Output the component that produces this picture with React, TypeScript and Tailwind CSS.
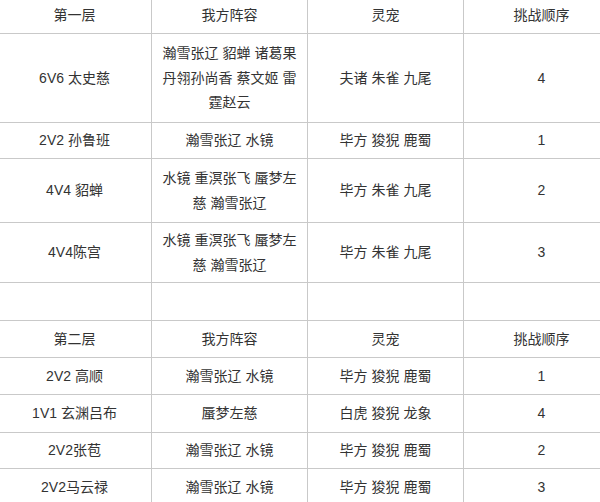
type Row = { h: string; cells: [string, string, string, string]; head?: boolean };

const ROWS: Row[] = [
  { h: "h-[37px]", head: true, cells: ["第一层", "我方阵容", "灵宠", "挑战顺序"] },
  { h: "h-[89px]", cells: ["6V6 太史慈", "瀚雪张辽 貂蝉 诸葛果 丹翎孙尚香 蔡文姬 雷霆赵云", "夫诸 朱雀 九尾", "4"] },
  { h: "h-[36px]", cells: ["2V2 孙鲁班", "瀚雪张辽 水镜", "毕方 狻猊 鹿蜀", "1"] },
  { h: "h-[64px]", cells: ["4V4 貂蝉", "水镜 重溟张飞 蜃梦左慈 瀚雪张辽", "毕方 朱雀 九尾", "2"] },
  { h: "h-[60px]", cells: ["4V4陈宫", "水镜 重溟张飞 蜃梦左慈 瀚雪张辽", "毕方 朱雀 九尾", "3"] },
  { h: "h-[38px]", cells: ["", "", "", ""] },
  { h: "h-[37px]", head: true, cells: ["第二层", "我方阵容", "灵宠", "挑战顺序"] },
  { h: "h-[37px]", cells: ["2V2 高顺", "瀚雪张辽 水镜", "毕方 狻猊 鹿蜀", "1"] },
  { h: "h-[38px]", cells: ["1V1 玄渊吕布", "蜃梦左慈", "白虎 狻猊 龙象", "4"] },
  { h: "h-[36px]", cells: ["2V2张苞", "瀚雪张辽 水镜", "毕方 狻猊 鹿蜀", "2"] },
  { h: "h-[37px]", cells: ["2V2马云禄", "瀚雪张辽 水镜", "毕方 狻猊 鹿蜀", "3"] },
];

const WIDTHS = ["w-[154px]", "w-[156px]", "w-[156px]", "w-[156px]"];

export default function App() {
  return (
    <div
      className="h-[502px] w-[600px] overflow-hidden bg-white text-[14px] leading-[24.5px] text-[#333333]"
      style={{ fontFamily: '"Liberation Sans", Arial, "Noto Sans CJK SC", sans-serif' }}
    >
      <div className="-mt-[3px] -ml-[2px] w-[622px]">
        {ROWS.map((row, i) => (
          <div key={i} className={`flex border-b border-[#c9c9c9] ${row.h}`}>
            {row.cells.map((c, j) => (
              <div
                key={j}
                className={`${WIDTHS[j]} flex shrink-0 items-center justify-center border-r border-[#c9c9c9] px-[9px] text-center`}
              >
                {c}
              </div>
            ))}
          </div>
        ))}
      </div>
    </div>
  );
}
